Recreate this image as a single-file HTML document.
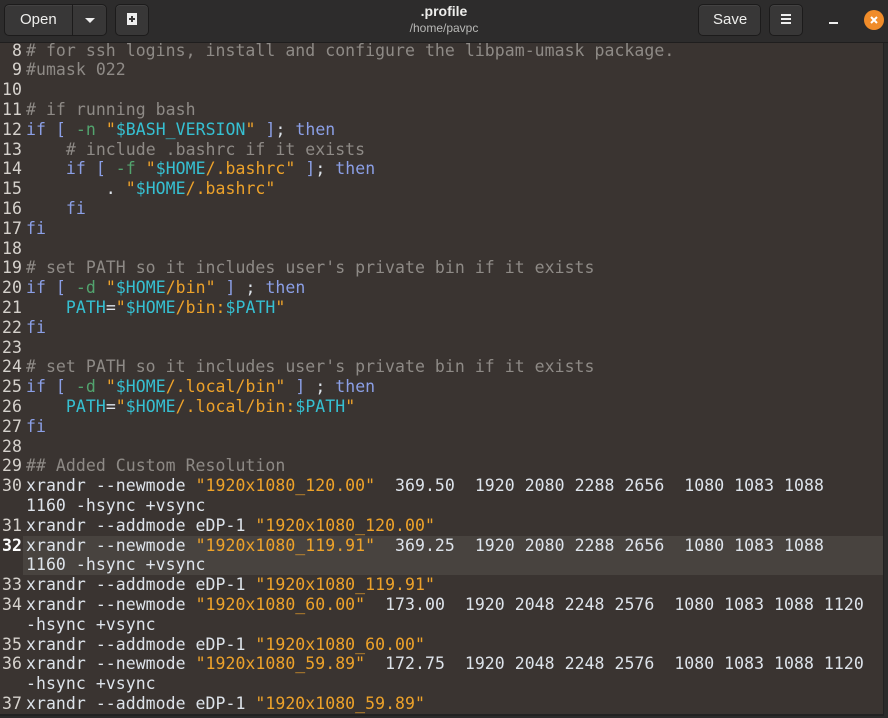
<!DOCTYPE html>
<html><head><meta charset="utf-8"><style>
*{margin:0;padding:0;box-sizing:border-box}
html,body{width:888px;height:718px;overflow:hidden;background:#2b2b2b}
.hdr{position:absolute;left:0;top:0;width:888px;height:43px;background:#2d2c2c;border-bottom:1px solid #1f1e1e;font-family:"Liberation Sans",sans-serif;color:#eeeeec}
.btn{position:absolute;top:4px;height:32px;background:#383737;border:1px solid #1c1b1b;border-radius:5px;box-shadow:inset 0 1px #434242}
.title{position:absolute;left:0;width:888px;text-align:center}
.ed{position:absolute;left:0;top:43px;width:884px;height:673px;background:#3a3431;border-right:1px solid #222;border-bottom:2px solid #222;overflow:hidden}
.r{position:absolute;left:0;height:19.8px;width:884px;font-family:"DejaVu Sans Mono",monospace;font-size:16.5px;letter-spacing:0.04px;line-height:19.8px;white-space:pre;color:#dde3ea}
.n{position:absolute;left:0;width:22px;text-align:right;color:#d6d2cd}
.t{position:absolute;left:26px}
.hl{background:#48433f}
.c{color:#8e8a86}.k{color:#8b9fe6}.s{color:#eda22a}.v{color:#36c0d2}.g{color:#52a46e}
</style></head><body>
<div class="hdr">
 <div class="btn" style="left:4px;width:103px"></div>
 <div style="position:absolute;left:72px;top:5px;width:1px;height:30px;background:#1c1b1b"></div>
 <div style="position:absolute;left:20px;top:11px;font-size:15px">Open</div>
 <div style="position:absolute;left:85px;top:18px;width:0;height:0;border-left:5px solid transparent;border-right:5px solid transparent;border-top:5px solid #eee"></div>
 <div class="btn" style="left:115px;width:34px"></div>
 <svg style="position:absolute;left:124px;top:11px" width="16" height="16" viewBox="0 0 16 16"><path d="M3 2h10v12H3z" fill="#eee"/><path d="M8 5v6M5 8h6" stroke="#383737" stroke-width="2"/></svg>
 <div class="title" style="top:3px;font-size:14px;font-weight:bold">.profile</div>
 <div class="title" style="top:21px;font-size:12px;color:#b8b8b6">/home/pavpc</div>
 <div class="btn" style="left:698px;width:63px"></div>
 <div style="position:absolute;left:713px;top:11px;font-size:15px">Save</div>
 <div class="btn" style="left:769px;width:34px"></div>
 <div style="position:absolute;left:781px;top:14px;width:10px;height:2px;background:#eee;box-shadow:0 4px #eee,0 8px #eee"></div>
 <div style="position:absolute;left:829px;top:22px;width:9px;height:2px;background:#eee"></div>
 <div style="position:absolute;left:864px;top:10px;width:20px;height:20px;border-radius:50%;background:#f08c2a"></div>
 <svg style="position:absolute;left:868px;top:14px" width="12" height="12" viewBox="0 0 12 12"><path d="M3 3l6 6M9 3l-6 6" stroke="#fff" stroke-width="2"/></svg>
</div>
<div class="ed">
<div class="r" style="top:-2.5px"><span class="n">8</span><span class="t"><span class="c"># for ssh logins, install and configure the libpam-umask package.</span></span></div>
<div class="r" style="top:17.3px"><span class="n">9</span><span class="t"><span class="c">#umask 022</span></span></div>
<div class="r" style="top:37.1px"><span class="n">10</span></div>
<div class="r" style="top:56.9px"><span class="n">11</span><span class="t"><span class="c"># if running bash</span></span></div>
<div class="r" style="top:76.7px"><span class="n">12</span><span class="t"><span class="k">if [</span> <span class="g">-n</span> <span class="s">"</span><span class="v">$BASH_VERSION</span><span class="s">"</span> <span class="k">]</span>; <span class="k">then</span></span></div>
<div class="r" style="top:96.5px"><span class="n">13</span><span class="t">    <span class="c"># include .bashrc if it exists</span></span></div>
<div class="r" style="top:116.3px"><span class="n">14</span><span class="t">    <span class="k">if [</span> <span class="g">-f</span> <span class="s">"</span><span class="v">$HOME</span><span class="s">/.bashrc"</span> <span class="k">]</span>; <span class="k">then</span></span></div>
<div class="r" style="top:136.1px"><span class="n">15</span><span class="t">        . <span class="s">"</span><span class="v">$HOME</span><span class="s">/.bashrc"</span></span></div>
<div class="r" style="top:155.9px"><span class="n">16</span><span class="t">    <span class="k">fi</span></span></div>
<div class="r" style="top:175.7px"><span class="n">17</span><span class="t"><span class="k">fi</span></span></div>
<div class="r" style="top:195.5px"><span class="n">18</span></div>
<div class="r" style="top:215.3px"><span class="n">19</span><span class="t"><span class="c"># set PATH so it includes user's private bin if it exists</span></span></div>
<div class="r" style="top:235.1px"><span class="n">20</span><span class="t"><span class="k">if [</span> <span class="g">-d</span> <span class="s">"</span><span class="v">$HOME</span><span class="s">/bin"</span> <span class="k">]</span> ; <span class="k">then</span></span></div>
<div class="r" style="top:254.9px"><span class="n">21</span><span class="t">    <span class="v">PATH</span>=<span class="s">"</span><span class="v">$HOME</span><span class="s">/bin:</span><span class="v">$PATH</span><span class="s">"</span></span></div>
<div class="r" style="top:274.7px"><span class="n">22</span><span class="t"><span class="k">fi</span></span></div>
<div class="r" style="top:294.5px"><span class="n">23</span></div>
<div class="r" style="top:314.3px"><span class="n">24</span><span class="t"><span class="c"># set PATH so it includes user's private bin if it exists</span></span></div>
<div class="r" style="top:334.1px"><span class="n">25</span><span class="t"><span class="k">if [</span> <span class="g">-d</span> <span class="s">"</span><span class="v">$HOME</span><span class="s">/.local/bin"</span> <span class="k">]</span> ; <span class="k">then</span></span></div>
<div class="r" style="top:353.9px"><span class="n">26</span><span class="t">    <span class="v">PATH</span>=<span class="s">"</span><span class="v">$HOME</span><span class="s">/.local/bin:</span><span class="v">$PATH</span><span class="s">"</span></span></div>
<div class="r" style="top:373.7px"><span class="n">27</span><span class="t"><span class="k">fi</span></span></div>
<div class="r" style="top:393.5px"><span class="n">28</span></div>
<div class="r" style="top:413.3px"><span class="n">29</span><span class="t"><span class="c">## Added Custom Resolution</span></span></div>
<div class="r" style="top:433.1px"><span class="n">30</span><span class="t">xrandr --newmode <span class="s">"1920x1080_120.00"</span>  369.50  1920 2080 2288 2656  1080 1083 1088</span></div>
<div class="r" style="top:452.9px"><span class="t">1160 -hsync +vsync</span></div>
<div class="r" style="top:472.7px"><span class="n">31</span><span class="t">xrandr --addmode eDP-1 <span class="s">"1920x1080_120.00"</span></span></div>
<div class="r hl" style="top:492.5px;left:23px;width:861px"></div>
<div class="r hl" style="top:512.3px;left:23px;width:861px"></div>
<div class="r" style="top:492.5px"><span class="n" style="font-weight:bold;color:#fff">32</span><span class="t">xrandr --newmode <span class="s">"1920x1080_119.91"</span>  369.25  1920 2080 2288 2656  1080 1083 1088</span></div>
<div class="r" style="top:512.3px"><span class="t">1160 -hsync +vsync</span></div>
<div class="r" style="top:532.1px"><span class="n">33</span><span class="t">xrandr --addmode eDP-1 <span class="s">"1920x1080_119.91"</span></span></div>
<div class="r" style="top:551.9px"><span class="n">34</span><span class="t">xrandr --newmode <span class="s">"1920x1080_60.00"</span>  173.00  1920 2048 2248 2576  1080 1083 1088 1120</span></div>
<div class="r" style="top:571.7px"><span class="t">-hsync +vsync</span></div>
<div class="r" style="top:591.5px"><span class="n">35</span><span class="t">xrandr --addmode eDP-1 <span class="s">"1920x1080_60.00"</span></span></div>
<div class="r" style="top:611.3px"><span class="n">36</span><span class="t">xrandr --newmode <span class="s">"1920x1080_59.89"</span>  172.75  1920 2048 2248 2576  1080 1083 1088 1120</span></div>
<div class="r" style="top:631.1px"><span class="t">-hsync +vsync</span></div>
<div class="r" style="top:650.9px"><span class="n">37</span><span class="t">xrandr --addmode eDP-1 <span class="s">"1920x1080_59.89"</span></span></div>
</div>
</body></html>
